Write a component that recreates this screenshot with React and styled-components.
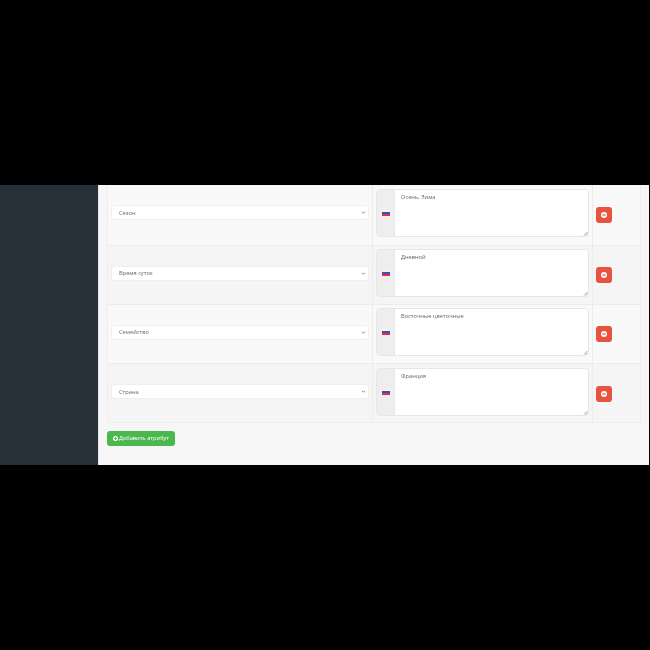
import React from 'react';
import styled, { createGlobalStyle } from 'styled-components';

const GlobalStyle = createGlobalStyle`
  html, body {
    margin: 0;
    padding: 0;
    background: #000;
  }
  body {
    font-family: "Open Sans", "Liberation Sans", sans-serif;
  }
`;

const Screen = styled.div`
  width: 650px;
  height: 650px;
  background: #000;
  padding: 185px 1px 185px 0;
  box-sizing: border-box;
`;

/* the reference is a downscaled capture, so everything in it is a little soft */
const Frame = styled.div`
  height: 100%;
  display: flex;
  filter: blur(0.3px);
`;

const Sidebar = styled.aside`
  width: 98px;
  flex: none;
  background: #263038;
  border-right: 1px solid #e6e7e8;
`;

const Main = styled.main`
  flex: 1;
  min-width: 0;
  background: #f6f6f6;
  padding: 0 8px;
`;

const Table = styled.div`
  border: 1px solid #eeeeee;
  border-top: none;
`;

const Row = styled.div`
  display: grid;
  grid-template-columns: 264px 220px 1fr;
  height: 59.3px;
  box-sizing: border-box;
  background: ${(p) => (p.$odd ? '#f9f9f9' : '#f5f5f5')};
  border-bottom: 1px solid #ececec;

  &:first-child {
    height: 60.5px;
  }

  &:last-child {
    height: 58.4px;
    border-bottom: none;
  }
`;

const Cell = styled.div`
  display: flex;
  align-items: center;
  padding: 3.6px 3px 7.8px;
  box-sizing: border-box;
  border-left: ${(p) => (p.$divided ? '1px solid #ececec' : 'none')};
`;

const SelectBox = styled.div`
  flex: 1;
  height: 15px;
  background: #fff;
  border: 1px solid #efefef;
  border-radius: 3px;
  box-sizing: border-box;
  display: flex;
  align-items: center;
  justify-content: space-between;
  padding: 0 2px 0 7px;
  font-size: 5.7px;
  color: #666;
`;

const InputGroup = styled.div`
  flex: 1;
  height: 48px;
  display: flex;
  border: 1px solid #e6e6e6;
  border-radius: 4px;
  overflow: hidden;
  box-sizing: border-box;
`;

const Addon = styled.div`
  width: 18px;
  flex: none;
  background: #eeeeee;
  border-right: 1px solid #e6e6e6;
  box-sizing: border-box;
  display: flex;
  align-items: center;
  justify-content: center;
`;

const TextArea = styled.div`
  flex: 1;
  position: relative;
  background: #fff;
  padding: 3px 6px;
  font-size: 5.7px;
  line-height: 8px;
  color: #666;
`;

const Grip = styled.svg`
  position: absolute;
  right: 0;
  bottom: 0;
`;

const DeleteButton = styled.button`
  width: 16px;
  height: 16px;
  margin-top: 4px;
  padding: 0;
  border: none;
  border-radius: 3px;
  background: #e8533f;
  display: flex;
  align-items: center;
  justify-content: center;
`;

const AddButton = styled.button`
  margin-top: 7.4px;
  height: 15px;
  width: 68px;
  padding: 0;
  border: none;
  border-radius: 3px;
  background: #4cb74e;
  color: #fff;
  font-family: inherit;
  font-size: 5.7px;
  font-weight: 400;
  display: flex;
  align-items: center;
  justify-content: center;
  gap: 1px;
  white-space: nowrap;
`;

const Chevron = () => (
  <svg width="5" height="5" viewBox="0 0 10 10">
    <path d="M2 3.5 L5 6.5 L8 3.5" fill="none" stroke="#666" strokeWidth="1.6" />
  </svg>
);

const Flag = () => (
  <svg width="8" height="6" viewBox="0 0 8 6">
    <rect width="8" height="2" fill="#f0f0f8" />
    <rect y="2" width="8" height="2" fill="#3b4fb5" />
    <rect y="4" width="8" height="2" fill="#d8304a" />
  </svg>
);

const MinusIcon = () => (
  <svg width="6" height="6" viewBox="0 0 10 10">
    <circle cx="5" cy="5" r="5" fill="#fff" />
    <rect x="2.2" y="4" width="5.6" height="2" fill="#e8533f" />
  </svg>
);

const PlusIcon = () => (
  <svg width="5" height="5" viewBox="0 0 10 10">
    <circle cx="5" cy="5" r="5" fill="#fff" />
    <rect x="2.2" y="4" width="5.6" height="2" fill="#4cb74e" />
    <rect x="4" y="2.2" width="2" height="5.6" fill="#4cb74e" />
  </svg>
);

const attributes = [
  { name: 'Сезон', value: 'Осень, Зима' },
  { name: 'Время суток', value: 'Дневной' },
  { name: 'Семейство', value: 'Восточные цветочные' },
  { name: 'Страна', value: 'Франция' },
];

const App = () => {
  return (
    <Screen>
      <GlobalStyle />
      <Frame>
        <Sidebar />
        <Main>
          <Table>
            {attributes.map((attr, i) => (
              <Row key={attr.name} $odd={i % 2 === 0}>
                <Cell>
                  <SelectBox>
                    {attr.name}
                    <Chevron />
                  </SelectBox>
                </Cell>
                <Cell $divided>
                  <InputGroup>
                    <Addon>
                      <Flag />
                    </Addon>
                    <TextArea>
                      {attr.value}
                      <Grip width="5" height="5" viewBox="0 0 5 5">
                        <path d="M1 4.5 L4.5 1 M3 4.5 L4.5 3" stroke="#777" strokeWidth="0.7" />
                      </Grip>
                    </TextArea>
                  </InputGroup>
                </Cell>
                <Cell $divided>
                  <DeleteButton>
                    <MinusIcon />
                  </DeleteButton>
                </Cell>
              </Row>
            ))}
          </Table>
          <AddButton>
            <PlusIcon />
            Добавить атрибут
          </AddButton>
        </Main>
      </Frame>
    </Screen>
  );
};

export default App;
